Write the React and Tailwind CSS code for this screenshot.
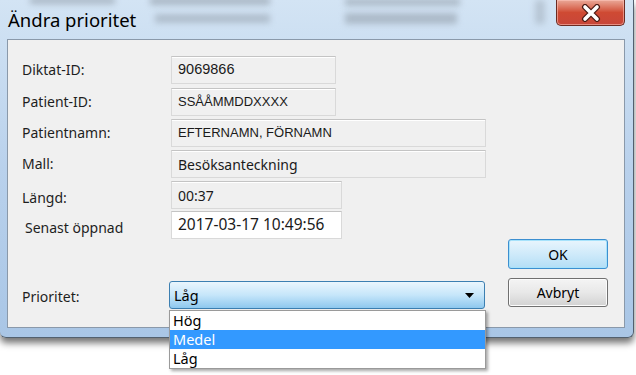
import React from "react";

const labelCls = "w-[149px] shrink-0 text-[14px] text-[#1e1e1e] leading-none";

function Field({ value, width, white, font }) {
  return (
    <div
      className={
        "h-[28px] flex items-center pl-[6px] border border-[#d9d9d9] border-t-[#c4c4c4] shadow-[inset_0_1px_0_#ffffff] " +
        (white ? "bg-white border-[#c8c8c8] border-t-[#a9a9a9] " : "bg-[#f0f0f0] ") +
        width
      }
    >
      <span className={"text-[#1a1a1a] whitespace-nowrap " + font}>{value}</span>
    </div>
  );
}

function Row({ label, children, className = "", labelCls: lc = "" }) {
  return (
    <div className={"flex items-center " + className}>
      <div className={labelCls + " " + lc}>{label}</div>
      {children}
    </div>
  );
}

export default function App() {
  const arial = "font-['Liberation_Sans',Arial,sans-serif] text-[13px]";
  const arialBig = "font-['Liberation_Sans',Arial,sans-serif] text-[14.5px]";
  const noto = "font-['Noto_Sans',sans-serif] text-[14px]";
  const notoBig = "font-['Noto_Sans',sans-serif] text-[15.5px]";
  return (
    <div className="w-[636px] h-[375px] bg-white relative overflow-hidden font-['Noto_Sans',sans-serif]">
      {/* window */}
      <div className="w-[634px] h-[338px] rounded-b-[6px] border-r border-b border-[#52606e] bg-gradient-to-b from-[#d3e4f4] via-[#b9d1ec] to-[#a9c6e6] shadow-[0_5px_7px_rgba(0,0,0,0.55)] flex flex-col">
        {/* title bar */}
        <div className="h-[39px] shrink-0 flex items-start relative overflow-hidden">
          <div className="absolute left-[30px] top-[-3px] w-[85px] h-[7px] bg-[#8f9aa6] opacity-60 blur-[3px]" />
          <div className="absolute left-[150px] top-[-3px] w-[120px] h-[8px] bg-[#8f9aa6] opacity-60 blur-[3px]" />
          <div className="absolute left-[155px] top-[14px] w-[115px] h-[9px] bg-[#8f9aa6] opacity-50 blur-[3px]" />
          <div className="absolute left-[345px] top-[-2px] w-[115px] h-[8px] bg-[#8f9aa6] opacity-55 blur-[3px]" />
          <div className="absolute left-[345px] top-[13px] w-[112px] h-[11px] bg-[#8f9aa6] opacity-55 blur-[3px]" />
          <div className="absolute left-[535px] top-[0px] w-[10px] h-[24px] bg-[#8f9aa6] opacity-40 blur-[3px]" />
          <div className="relative pl-[8px] pt-[11px] text-[18.5px] leading-none text-black whitespace-nowrap">
            Ändra prioritet
          </div>
          <div className="relative ml-auto mr-[8px] w-[69px] h-[26px] rounded-b-[5px] border border-t-0 border-[#6b2b22] bg-gradient-to-b from-[#e9a898] via-[#cf4a33] to-[#c7463a] shadow-[inset_0_0_0_1px_rgba(255,200,190,0.55)] flex items-center justify-center">
            <svg width="22" height="18" viewBox="0 0 22 18">
              <path d="M5 3 L17 15 M17 3 L5 15" stroke="#4a1a14" strokeWidth="6" strokeLinecap="round" />
              <path d="M5 3 L17 15 M17 3 L5 15" stroke="#ffffff" strokeWidth="3.6" strokeLinecap="round" />
            </svg>
          </div>
        </div>
        {/* client */}
        <div className="ml-[7px] w-[618px] h-[289px] shrink-0 border border-[#8a99aa] bg-[#f0f0f0] flex">
          <div className="pl-[14px] pt-[16px] flex flex-col">
            <Row label="Diktat-ID:">
              <Field value="9069866" width="w-[165px]" font={arialBig} />
            </Row>
            <Row label="Patient-ID:" className="mt-[4px]">
              <Field value="SSÅÅMMDDXXXX" width="w-[165px]" font={arial} />
            </Row>
            <Row label="Patientnamn:" className="mt-[3px]">
              <Field value="EFTERNAMN, FÖRNAMN" width="w-[315px]" font={arial} />
            </Row>
            <Row label="Mall:" className="mt-[3px]">
              <Field value="Besöksanteckning" width="w-[315px]" font={noto} />
            </Row>
            <Row label="Längd:" className="mt-[3px]" labelCls="pt-[5px]">
              <Field value="00:37" width="w-[171px]" font={noto} />
            </Row>
            <Row label="Senast öppnad" className="mt-[2px]" labelCls="pl-[3px] pt-[5px]">
              <Field value="2017-03-17 10:49:56" width="w-[171px]" font={notoBig} white />
            </Row>
            <div className="mt-[42px] flex items-center">
              <div className="w-[147px] shrink-0 text-[14px] text-[#1e1e1e] leading-none pt-[3px]">Prioritet:</div>
              <div className="w-[316px] h-[28px] rounded-[3px] border border-[#3c7fb1] bg-gradient-to-b from-[#eaf6fd] via-[#c6e6fa] to-[#8ec8ee] flex items-center pl-[4px] pr-[10px]">
                <span className="text-[14.5px] text-black leading-none">Låg</span>
                <svg className="ml-auto" width="9" height="5" viewBox="0 0 9 5">
                  <path d="M0 0 H9 L4.5 5 Z" fill="#000" />
                </svg>
              </div>
            </div>
          </div>
          <div className="ml-auto pr-[16px] pt-[199px] flex flex-col">
            <div className="w-[100px] h-[30px] rounded-[3px] border border-[#3c8fd0] bg-gradient-to-b from-[#e8f5fd] via-[#cfeafa] to-[#b3def6] shadow-[inset_0_0_0_1px_#a6e2fb] flex items-center justify-center text-[14px] text-black">
              OK
            </div>
            <div className="mt-[9px] w-[100px] h-[29px] rounded-[3px] border border-[#707070] bg-gradient-to-b from-[#f4f4f4] via-[#e8e8e8] to-[#d2d2d2] shadow-[inset_0_0_0_1px_#fcfcfc] flex items-center justify-center text-[14px] text-black">
              Avbryt
            </div>
          </div>
        </div>
      </div>
      {/* open dropdown list */}
      <div className="absolute left-[169px] top-[310px] w-[317px] h-[59px] bg-white border border-[#9a9a9a] shadow-[2px_2px_3px_rgba(0,0,0,0.35)] flex flex-col">
        <div className="h-[19px] flex items-center pl-[3px] text-[14.5px] text-black leading-none">Hög</div>
        <div className="h-[20px] flex items-center pl-[3px] text-[14.5px] text-white bg-[#3399ff] leading-none">Medel</div>
        <div className="h-[19px] flex items-center pl-[3px] text-[14.5px] text-black leading-none">Låg</div>
      </div>
    </div>
  );
}
